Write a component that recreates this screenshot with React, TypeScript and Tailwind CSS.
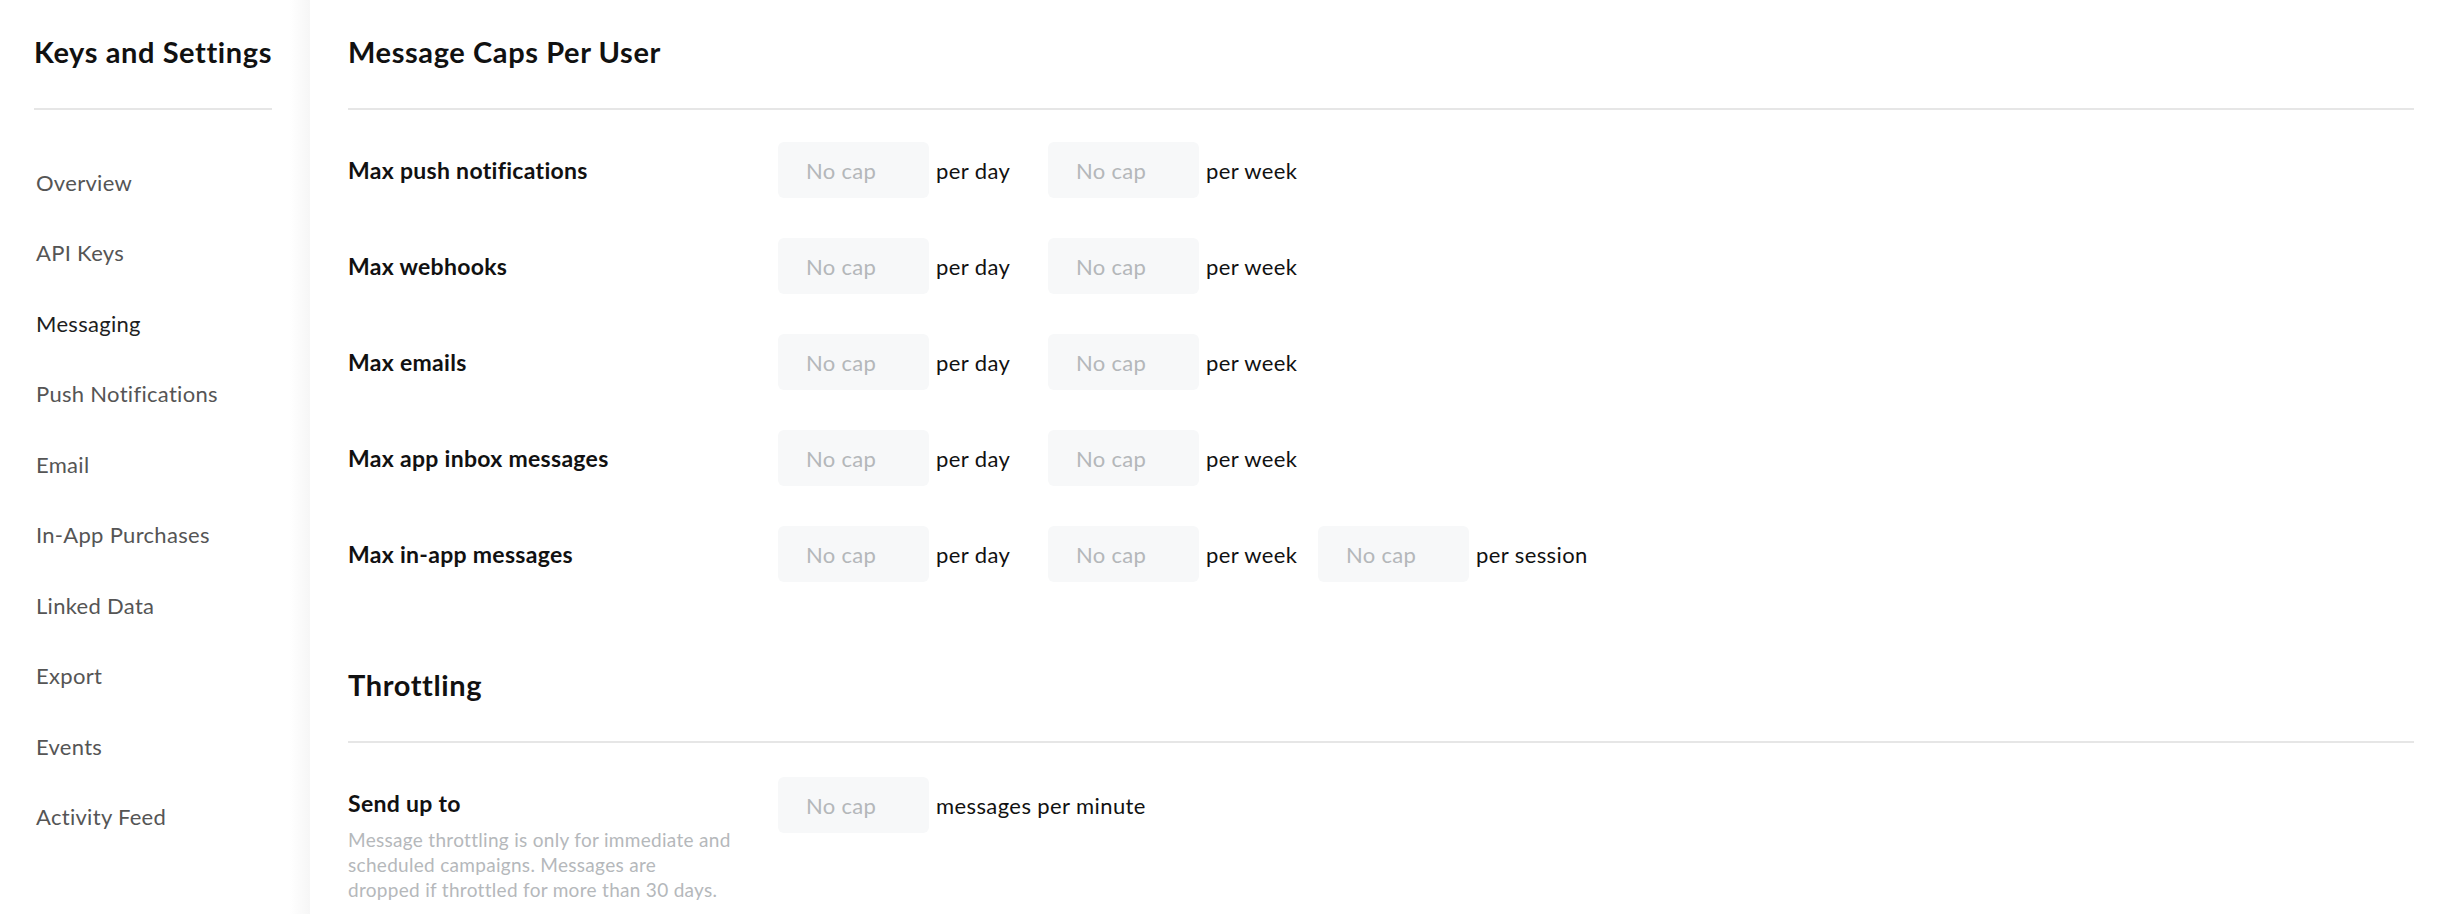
const navItems = [
  "Overview",
  "API Keys",
  "Messaging",
  "Push Notifications",
  "Email",
  "In-App Purchases",
  "Linked Data",
  "Export",
  "Events",
  "Activity Feed",
];

const capRows = [
  { label: "Max push notifications", units: ["per day", "per week"] },
  { label: "Max webhooks", units: ["per day", "per week"] },
  { label: "Max emails", units: ["per day", "per week"] },
  { label: "Max app inbox messages", units: ["per day", "per week"] },
  { label: "Max in-app messages", units: ["per day", "per week", "per session"] },
];

function CapInput() {
  return (
    <input
      type="text"
      placeholder="No cap"
      className="h-[56px] w-[151px] shrink-0 rounded-[6px] bg-[#f7f8f9] px-[28px] text-[22px] tracking-[0.3px] text-[#222] outline-none placeholder:text-[#b4b7ba]"
    />
  );
}

function CapGroup({ unit }: { unit: string }) {
  return (
    <div className="flex w-[270px] items-center">
      <CapInput />
      <span className="ml-[7px] whitespace-nowrap text-[22px] tracking-[0.4px] text-[#111]">{unit}</span>
    </div>
  );
}

function SectionTitle({ children }: { children: string }) {
  return (
    <div className="border-b-2 border-[#e6e6e6] pb-[39px]">
      <h2 className="text-[29px] font-bold leading-[34px] tracking-[0.6px] text-[#111]">{children}</h2>
    </div>
  );
}

export default function App() {
  return (
    <div className="flex min-h-[914px] bg-white font-['Lato',sans-serif] antialiased">
      <aside className="flex w-[310px] shrink-0">
        <div className="flex-1 pl-[34px] pr-[18px] pt-[35px]">
          <div className="border-b-2 border-[#e6e6e6] pb-[39px]">
            <h1 className="text-[29px] font-bold leading-[34px] tracking-[0.6px] text-[#111]">
              Keys and Settings
            </h1>
          </div>
          <nav className="mt-[37px] flex flex-col">
            {navItems.map((item) => (
              <a
                key={item}
                href="#"
                className={
                  "flex h-[70.5px] items-center pl-[2px] text-[22px] tracking-[0.3px] " +
                  (item === "Messaging" ? "text-[#1e1e1e]" : "text-[#555]")
                }
              >
                {item}
              </a>
            ))}
          </nav>
        </div>
        <div className="w-[20px] bg-gradient-to-r from-white to-[#f6f6f6]" />
      </aside>

      <main className="flex-1 pl-[38px] pr-[34px] pt-[35px]">
        <SectionTitle>Message Caps Per User</SectionTitle>
        <div className="mt-[32px] flex flex-col gap-[40px]">
          {capRows.map((row) => (
            <div key={row.label} className="flex items-center">
              <div className="w-[430px] shrink-0 text-[23px] font-bold tracking-[0.3px] text-[#111]">
                {row.label}
              </div>
              {row.units.map((u) => (
                <CapGroup key={u} unit={u} />
              ))}
            </div>
          ))}
        </div>

        <div className="mt-[86px]">
          <SectionTitle>Throttling</SectionTitle>
        </div>
        <div className="mt-[34px] flex items-start">
          <div className="w-[430px] shrink-0 pt-[13px]">
            <div className="text-[23px] font-bold leading-[26px] tracking-[0.3px] text-[#111]">Send up to</div>
            <p className="mt-[11px] w-[400px] text-[19px] leading-[25px] tracking-[0.3px] text-[#b5b8bb]">
              Message throttling is only for immediate and
              <br />
              scheduled campaigns. Messages are
              <br />
              dropped if throttled for more than 30 days.
            </p>
          </div>
          <div className="flex items-center">
            <CapInput />
            <span className="ml-[7px] whitespace-nowrap text-[22px] tracking-[0.4px] text-[#111]">
              messages per minute
            </span>
          </div>
        </div>
      </main>
    </div>
  );
}
